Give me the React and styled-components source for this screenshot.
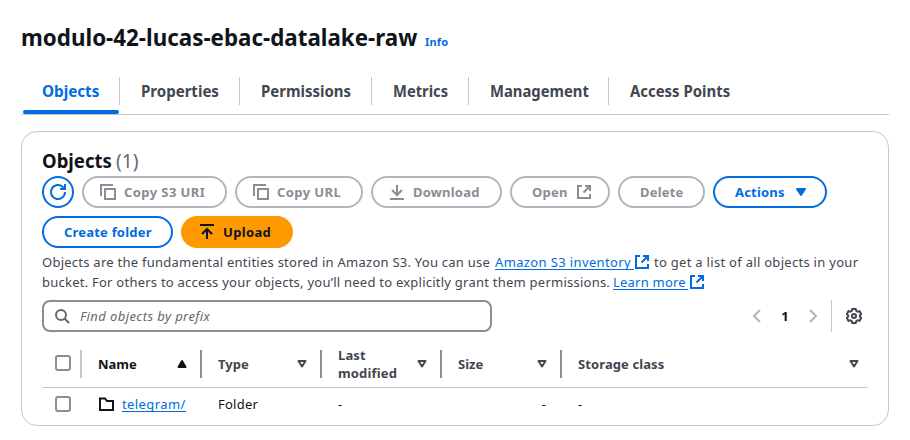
import React from 'react';
import styled, { createGlobalStyle, css } from 'styled-components';

const blue = '#006ce0';
const ink = '#0f141a';
const slate = '#424650';

const Global = createGlobalStyle`
  * { box-sizing: border-box; }
  body { margin: 0; background: #fff; }
  button, input { font: inherit; }
`;

const Page = styled.main`
  width: 910px;
  height: 440px;
  padding: 19px 21px 0;
  overflow: hidden;
  color: ${slate};
  font: 13px/20px "Noto Sans", "Open Sans", sans-serif;
`;

const Label = styled.span`
  letter-spacing: ${({ $ls }) => $ls || 0}px;
  white-space: pre;
`;

const Heading = styled.span`
  display: block;
  width: max-content;
  transform: scaleX(${({ $x }) => $x || 0.93});
  transform-origin: 0 0;
`;

const TitleBar = styled.header`
  display: flex;
  align-items: baseline;
  height: 37px;
`;

const Title = styled.h1`
  width: 404px;
  margin: 0;
  color: ${ink};
  font-size: 24px;
  line-height: 36px;
  font-weight: 700;
`;

const InfoLink = styled.a`
  color: ${blue};
  font-size: 11px;
  font-weight: 700;
`;

const Tabs = styled.nav`
  display: flex;
  height: 59px;
  padding-top: 21px;
  border-bottom: 1px solid #c6c6cd;
`;

const Tab = styled.a`
  position: relative;
  width: ${({ $w }) => $w}px;
  height: 28px;
  padding-left: 21px;
  border-right: 1px solid ${({ $last }) => ($last ? 'transparent' : '#c6c6cd')};
  color: ${({ $active }) => ($active ? blue : slate)};
  font-size: 16px;
  line-height: 28px;
  font-weight: 700;
  ${({ $active }) => $active && css`
    &::after {
      content: '';
      position: absolute;
      left: 2px;
      right: 0;
      top: 33px;
      height: 4px;
      border-radius: 4px;
      background: ${blue};
    }
  `}
`;

const Card = styled.section`
  height: 295px;
  margin-top: 16px;
  padding: 16px 20px 0;
  border: 1px solid #c6c6cd;
  border-radius: 16px;
`;

const CardTitle = styled.h2`
  display: flex;
  margin: 0;
  height: 28px;
  color: ${ink};
  font-size: 20px;
  line-height: 25px;
  font-weight: 700;
`;

const CardName = styled.span`
  width: 74px;
`;

const Count = styled.span`
  color: #656871;
  font-weight: 400;
`;

const Actions = styled.div`
  display: flex;
  flex-wrap: wrap;
  gap: 8px;
`;

const tones = {
  normal: css`border-color: ${blue}; color: ${blue};`,
  disabled: css`border-color: #b4b4bb; color: #8c8c94;`,
  primary: css`border-color: #ff9900; background: #ff9900; color: ${ink};`,
};

const Button = styled.button`
  display: flex;
  align-items: center;
  justify-content: flex-start;
  width: ${({ $w }) => $w}px;
  height: 32px;
  padding: 0 0 0 ${({ $pad }) => $pad ?? 20}px;
  gap: ${({ $gap }) => $gap ?? 8}px;
  border: 2px solid;
  border-radius: 20px;
  background: #fff;
  font-size: 13px;
  font-weight: 700;
  line-height: 20px;
  ${({ $tone }) => tones[$tone || 'normal']}
`;

const Description = styled.p`
  margin: 4px 0 8px;
`;

const Line = styled.span`
  display: flex;
  height: 20px;
  white-space: pre;
`;

const Link = styled.a`
  display: block;
  height: 18px;
  width: ${({ $w }) => $w}px;
  border-bottom: 1px solid ${blue};
  color: ${blue};
  white-space: nowrap;
  letter-spacing: ${({ $ls }) => $ls || 0}px;
`;

const Lead = styled.span`
  width: ${({ $w }) => $w}px;
  letter-spacing: ${({ $ls }) => $ls}px;
  white-space: pre;
`;

const LinkIcon = styled.span`
  width: ${({ $w }) => $w}px;
  padding: 2px 0 0 ${({ $pad }) => $pad || 0}px;
  color: ${blue};
`;

const Svg = styled.svg`
  display: block;
  flex: none;
  fill: none;
  stroke: currentColor;
  stroke-width: 2;
`;

const Tools = styled.div`
  display: flex;
  align-items: center;
  height: 32px;
`;

const Search = styled.div`
  display: flex;
  align-items: center;
  width: 450px;
  height: 32px;
  padding-left: 10px;
  gap: 10px;
  border: 2px solid #8c8c94;
  border-radius: 8px;
  color: #656871;
  font-style: italic;
`;

const Pager = styled.div`
  display: flex;
  align-items: center;
  width: 66px;
  margin-left: 260px;
  justify-content: space-between;
  color: #b4b4bb;
`;

const PageNumber = styled.span`
  color: ${ink};
  font-weight: 700;
`;

const Settings = styled.div`
  display: flex;
  align-items: center;
  height: 32px;
  margin-left: 13px;
  padding-left: 14px;
  border-left: 1px solid #c6c6cd;
`;

const HeadRow = styled.div`
  display: grid;
  grid-template-columns: 40px 120px 120px 120px 120px 306px;
  height: 56px;
  border-bottom: 1px solid #c6c6cd;
  padding-top: 18px;
`;

const BodyRow = styled(HeadRow)`
  height: 37px;
  padding-top: 6px;
  border: 0;
  color: ${ink};
`;

const HeadCell = styled.div`
  display: flex;
  align-items: center;
  justify-content: space-between;
  height: 28px;
  padding: 0 ${({ $end }) => $end ?? 12}px 0 16px;
  border-right: 2px solid ${({ $edge }) => $edge || '#8c8c94'};
  color: ${({ $dark }) => ($dark ? ink : slate)};
  font-weight: 700;
  line-height: 18px;
`;

const Cell = styled.div`
  display: flex;
  align-items: flex-start;
  height: 21px;
  padding: 0 16px;
  justify-content: ${({ $end }) => ($end ? 'flex-end' : 'flex-start')};
  gap: 8px;
`;

const FolderSlot = styled.span`
  padding-top: 2px;
`;

const CheckCell = styled(HeadCell)`
  padding: 0 0 2px 13px;
`;

const Check = styled.span`
  width: 16px;
  height: 16px;
  border: 2px solid #8c8c94;
  border-radius: 3px;
`;

const RowCheck = styled(Check)`
  margin: 2px 0 0 13px;
`;

const RefreshIcon = () => (
  <Svg width="16" height="16" viewBox="0 0 16 16">
    <path d="M15 8a7 7 0 1 1-2-4.900L15 5" />
    <path d="M15 0v5h-5" />
  </Svg>
);
const CopyIcon = () => (
  <Svg width="16" height="16" viewBox="0 0 16 16">
    <path d="M5 5h10v10H5zM1 12V1h12" />
  </Svg>
);
const ExternalIcon = () => (
  <Svg width="16" height="16" viewBox="0 0 16 16">
    <path d="M6 2H2v12h12v-4M9 2h5v5M14 2 7.500 8.500" />
  </Svg>
);
const DownloadIcon = () => (
  <Svg width="16" height="16" viewBox="0 0 16 16">
    <path d="M1 15h14M8 1v10M3 6l5 5 5-5" />
  </Svg>
);
const UploadIcon = () => (
  <Svg width="16" height="16" viewBox="0 0 16 16">
    <path d="M1 1h14M8 15V5M3 10l5-5 5 5" />
  </Svg>
);
const SearchIcon = () => (
  <Svg width="16" height="16" viewBox="0 0 16 16">
    <circle cx="7" cy="7" r="5" />
    <path d="m15 15-4.500-4.500" />
  </Svg>
);
const Chevron = ({ d }) => (
  <Svg width="9" height="14" viewBox="0 0 9 14"><path d={d} /></Svg>
);
const GearIcon = () => (
  <Svg width="16" height="16" viewBox="0 0 16 16">
    <path strokeLinejoin="round" d="M6.200 1h3.600l.5 2 1.200.7 2-.6 1.700 3L13.800 7.500v1l1.400 1.400-1.700 3-2-.6-1.200.7-.5 2H6.200l-.5-2-1.200-.7-2 .6-1.700-3L2.200 8.500v-1L.8 6.100l1.700-3 2 .6L5.700 3z" />
    <circle cx="8" cy="8" r="2" />
  </Svg>
);
const FolderIcon = () => (
  <Svg width="16" height="16" viewBox="0 0 16 16">
    <path d="M2 2.500h5l2 2.500h6v9H2z" />
  </Svg>
);
const SortIcon = ({ up }) => (
  <Svg width="12" height="10" viewBox="0 0 12 10">
    {up
      ? <path d="M6 2 2.500 8h7z" fill="currentColor" strokeLinejoin="round" />
      : <path d="M2.500 2h7L6 7.500z" strokeLinejoin="round" />}
  </Svg>
);
const CaretIcon = () => (
  <Svg width="12" height="10" viewBox="0 0 12 10">
    <path d="M2 2h8L6 8z" fill="currentColor" strokeLinejoin="round" />
  </Svg>
);

const tabs = [
  ['Objects', 99, 0.95], ['Properties', 120, 0.94], ['Permissions', 132, 0.935],
  ['Metrics', 97, 0.92], ['Management', 140, 0.925], ['Access Points', 160, 0.932],
];

export default function App() {
  return (
    <Page>
      <Global />
      <TitleBar>
        <Title><Heading $x={0.932}>modulo-42-lucas-ebac-datalake-raw</Heading></Title>
        <InfoLink><Label $ls={0.2}>Info</Label></InfoLink>
      </TitleBar>
      <Tabs>
        {tabs.map(([name, w, x], i) => (
          <Tab key={name} $w={w} $active={i === 0} $last={i === 5}><Heading $x={x}>{name}</Heading></Tab>
        ))}
      </Tabs>
      <Card>
        <CardTitle>
          <CardName><Heading $x={0.925}>Objects</Heading></CardName>
          <Count><Heading $x={0.96}>(1)</Heading></Count>
        </CardTitle>
        <Actions>
          <Button $w={32} $pad={6} aria-label="Refresh"><RefreshIcon /></Button>
          <Button $w={145} $pad={16} $tone="disabled"><CopyIcon /><Label $ls={0.42}>Copy S3 URI</Label></Button>
          <Button $w={128} $pad={16} $tone="disabled"><CopyIcon /><Label $ls={0.42}>Copy URL</Label></Button>
          <Button $w={131} $pad={16} $tone="disabled"><DownloadIcon /><Label $ls={0.2}>Download</Label></Button>
          <Button $w={100} $tone="disabled"><Label $ls={0.25}>Open</Label><ExternalIcon /></Button>
          <Button $w={87} $tone="disabled"><Label $ls={0.2}>Delete</Label></Button>
          <Button $w={114} $gap={10}><Label $ls={0.2}>Actions</Label><CaretIcon /></Button>
          <Button $w={131}><Label $ls={0.2}>Create folder</Label></Button>
          <Button $w={112} $pad={16} $tone="primary"><UploadIcon /><Label $ls={0.35}>Upload</Label></Button>
        </Actions>
        <Description>
          <Line>
            <Lead $w={453} $ls={0.25}>Objects are the fundamental entities stored in Amazon S3. You can use </Lead>
            <Link $w={139} $ls={0.37}>Amazon S3 inventory</Link>
            <LinkIcon $w={20}><ExternalIcon /></LinkIcon>
            <Label $ls={0.29}>to get a list of all objects in your</Label>
          </Line>
          <Line>
            <Lead $w={571} $ls={0.24}>bucket. For others to access your objects, you’ll need to explicitly grant them permissions. </Lead>
            <Link $w={75} $ls={0.22}>Learn more</Link>
            <LinkIcon $w={20} $pad={1}><ExternalIcon /></LinkIcon>
          </Line>
        </Description>
        <Tools>
          <Search><SearchIcon /><Label $ls={0.41}>Find objects by prefix</Label></Search>
          <Pager>
            <Chevron d="m8 1-6 6 6 6" />
            <PageNumber>1</PageNumber>
            <Chevron d="m1 1 6 6-6 6" />
          </Pager>
          <Settings><GearIcon /></Settings>
        </Tools>
        <HeadRow>
          <CheckCell $edge="#c6c6cd"><Check /></CheckCell>
          <HeadCell $dark><Label>Name</Label><SortIcon up /></HeadCell>
          <HeadCell><Label>Type</Label><SortIcon /></HeadCell>
          <HeadCell><Label $ls={0.15}>Last<br />modified</Label><SortIcon /></HeadCell>
          <HeadCell><Label>Size</Label><SortIcon /></HeadCell>
          <HeadCell $edge="transparent" $end={6}><Label $ls={0.1}>Storage class</Label><SortIcon /></HeadCell>
        </HeadRow>
        <BodyRow>
          <RowCheck />
          <Cell><FolderSlot><FolderIcon /></FolderSlot><Link $w={64} $ls={0.4}>telegram/</Link></Cell>
          <Cell><Label $ls={0.25}>Folder</Label></Cell>
          <Cell>-</Cell>
          <Cell $end>-</Cell>
          <Cell>-</Cell>
        </BodyRow>
      </Card>
    </Page>
  );
}
